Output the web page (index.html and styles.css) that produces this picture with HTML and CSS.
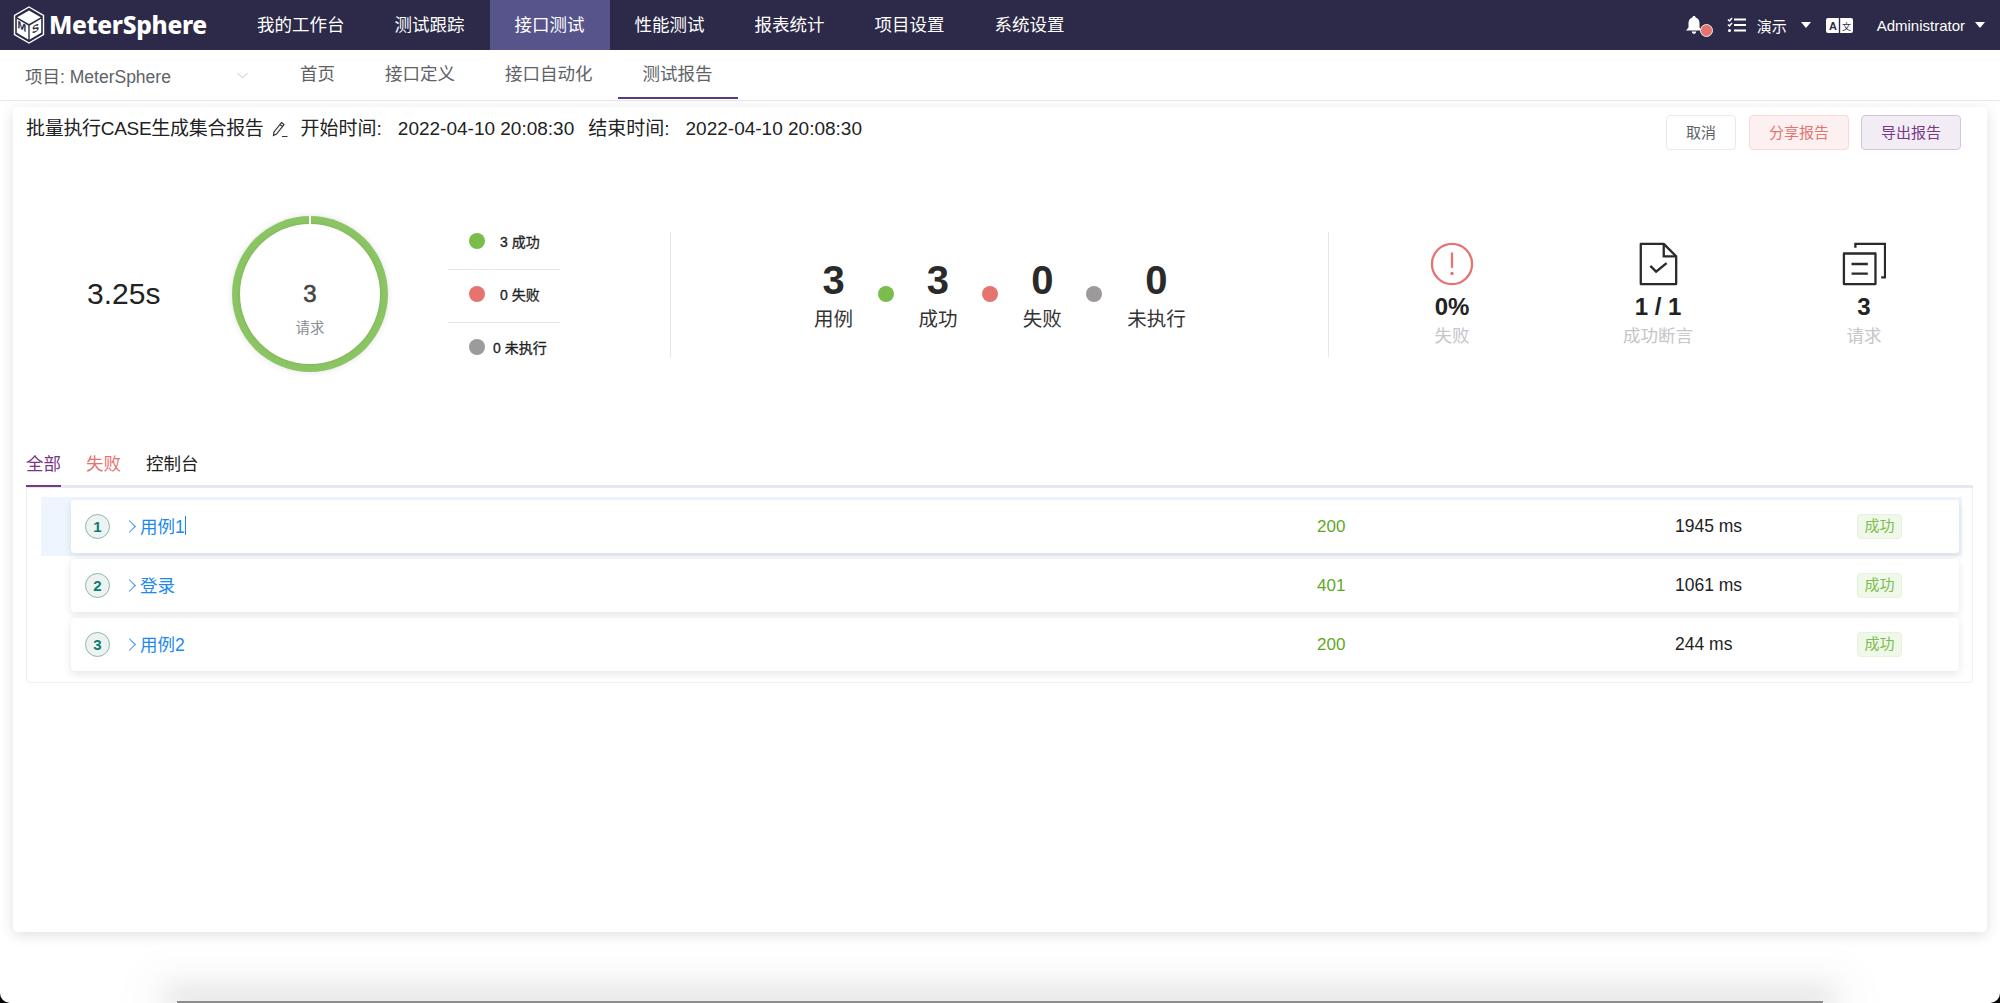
FILE: index.html
```html
<!DOCTYPE html>
<html>
<head>
  <meta charset="UTF-8">
  <title>测试报告</title>
  <link rel="stylesheet" href="styles.css">
</head>
<body>
<div class="page">
  <header class="topbar">
    <div class="brand">
      <svg class="logo" viewBox="0 0 32 38">
        <path d="M16 1 30.5 9.5V28.5L16 37 1.5 28.5V9.5Z" fill="#2c2a48" stroke="#fff" stroke-width="1.4"/>
        <path d="M16 4.5 27.8 11.2 16 18 4.2 11.2Z" fill="#fff"/>
        <path d="M3.8 12.8 15.3 19.5V33.5L3.8 26.8Z" fill="#fff"/>
        <path d="M28.2 12.8 16.7 19.5V33.5L28.2 26.8Z" fill="#fff"/>
        <text class="logo-letter" transform="matrix(1 .55 0 1 4.5 21.5)">M</text>
        <text class="logo-letter" transform="matrix(1 -.55 0 1 19 28)">S</text>
      </svg>
      <span class="brand-name">MeterSphere</span>
    </div>
    <nav class="mainnav">
      <a>我的工作台</a>
      <a>测试跟踪</a>
      <a class="on">接口测试</a>
      <a>性能测试</a>
      <a>报表统计</a>
      <a>项目设置</a>
      <a>系统设置</a>
    </nav>
    <div class="tools">
      <span class="bell">
        <svg width="18" height="20" viewBox="0 0 18 20"><path d="M9 1c1 0 1.6.7 1.6 1.5C13 3.3 14.5 5.5 14.5 8v4.5L17 15.5H1L3.5 12.5V8C3.5 5.5 5 3.3 7.4 2.5 7.4 1.7 8 1 9 1ZM6.8 16.5h4.4C11 18 10.2 18.8 9 18.8S7 18 6.8 16.5Z" fill="#fff"/></svg>
        <i class="bell-dot"></i>
      </span>
      <svg class="tasks" width="19" height="16" viewBox="0 0 19 16">
        <path d="M1 2.5 2.5 4 5 1M1 7.5 2.5 9 5 6" fill="none" stroke="#fff" stroke-width="1.5"/>
        <circle cx="2.5" cy="13.5" r="1.5" fill="#fff"/>
        <path d="M7 2.5h12M7 8h12M7 13.5h12" stroke="#fff" stroke-width="2"/>
      </svg>
      <span class="tool-text">演示</span>
      <i class="caret caret-a"></i>
      <svg class="lang" width="27" height="15" viewBox="0 0 27 15">
        <rect x="0" y="0" width="27" height="15" rx="2" fill="#fff"/>
        <rect x="12.8" y="0" width="1.4" height="15" fill="#2c2a48"/>
        <text class="lang-a" x="3" y="11.5">A</text>
        <text class="lang-b" x="16" y="11.5">文</text>
      </svg>
      <span class="tool-text user">Administrator</span>
      <i class="caret"></i>
    </div>
  </header>

  <div class="subnav">
    <div class="project">
      <span>项目: MeterSphere</span>
      <svg width="11" height="7" viewBox="0 0 11 7"><path d="M.5 1 5.5 6 10.5 1" fill="none" stroke="#c0c4cc" stroke-width="1"/></svg>
    </div>
    <a>首页</a>
    <a>接口定义</a>
    <a>接口自动化</a>
    <a class="on">测试报告</a>
  </div>

  <main class="main">
    <section class="card">
      <div class="titlebar">
        <div class="title">
          <span class="report-name">批量执行CASE生成集合报告</span>
          <svg class="pencil" width="17" height="17" viewBox="0 0 17 17"><path d="M10.5 1.5 13 3.5 5.5 13 2.5 14.5 3 11ZM9 3.5 11.5 5.5M11 15.5H16.5" fill="none" stroke="#333" stroke-width="1.2"/></svg>
          <span class="time-label">开始时间:</span>
          <span class="time-value">2022-04-10 20:08:30</span>
          <span class="time-label end">结束时间:</span>
          <span class="time-value">2022-04-10 20:08:30</span>
        </div>
        <div class="actions">
          <button class="btn">取消</button>
          <button class="btn btn-red">分享报告</button>
          <button class="btn btn-purple">导出报告</button>
        </div>
      </div>

      <div class="summary">
        <div class="duration">3.25s</div>
        <div class="ring">
          <div class="ring-inner">
            <b>3</b>
            <span>请求</span>
          </div>
        </div>
        <ul class="legend">
          <li><i class="dot green"></i><span class="legend-text">3 成功</span></li>
          <li><i class="dot red"></i><span class="legend-text">0 失败</span></li>
          <li><i class="dot grey"></i><span class="legend-text wide">0 未执行</span></li>
        </ul>
        <div class="stats">
          <div class="stat"><b>3</b><span>用例</span></div>
          <i class="dot green"></i>
          <div class="stat"><b>3</b><span>成功</span></div>
          <i class="dot red"></i>
          <div class="stat"><b>0</b><span>失败</span></div>
          <i class="dot grey"></i>
          <div class="stat"><b>0</b><span>未执行</span></div>
        </div>
        <div class="metrics">
          <div class="metric">
            <svg width="44" height="44" viewBox="0 0 46 46">
              <circle cx="23" cy="23" r="21" fill="none" stroke="#e57471" stroke-width="2.4"/>
              <path d="M23 11V27" stroke="#e57471" stroke-width="2.4"/>
              <circle cx="23" cy="33" r="1.8" fill="#e57471"/>
            </svg>
            <b>0%</b>
            <span>失败</span>
          </div>
          <div class="metric">
            <svg width="44" height="44" viewBox="0 0 46 46">
              <path d="M5 2H29L42 15V44H5Z" fill="none" stroke="#2a2a2a" stroke-width="2.4" stroke-linejoin="round"/>
              <path d="M29 2V15H42" fill="none" stroke="#2a2a2a" stroke-width="2.4"/>
              <path d="M15 25 21 31 32 22" fill="none" stroke="#2a2a2a" stroke-width="2.4"/>
            </svg>
            <b>1 / 1</b>
            <span>成功断言</span>
          </div>
          <div class="metric">
            <svg width="44" height="44" viewBox="0 0 46 46">
              <path d="M14 6V2H45V37H41" fill="none" stroke="#2a2a2a" stroke-width="2.4"/>
              <rect x="2" y="12" width="33" height="32" fill="none" stroke="#2a2a2a" stroke-width="2.4" stroke-linejoin="round"/>
              <path d="M10 23H27M10 33H27" stroke="#2a2a2a" stroke-width="2.4"/>
            </svg>
            <b>3</b>
            <span>请求</span>
          </div>
        </div>
      </div>

      <div class="tabs">
        <a class="on">全部</a>
        <a class="fail">失败</a>
        <a>控制台</a>
      </div>

      <div class="panel">
        <div class="row-wrap hl">
          <div class="row">
            <div class="name"><i class="num">1</i><i class="arrow"></i>用例1<i class="cursor"></i></div>
            <div class="code">200</div>
            <div class="cost">1945 ms</div>
            <div><span class="tag">成功</span></div>
          </div>
        </div>
        <div class="row-wrap">
          <div class="row">
            <div class="name"><i class="num">2</i><i class="arrow"></i>登录</div>
            <div class="code">401</div>
            <div class="cost">1061 ms</div>
            <div><span class="tag">成功</span></div>
          </div>
        </div>
        <div class="row-wrap">
          <div class="row">
            <div class="name"><i class="num">3</i><i class="arrow"></i>用例2</div>
            <div class="code">200</div>
            <div class="cost">244 ms</div>
            <div><span class="tag">成功</span></div>
          </div>
        </div>
      </div>
    </section>
  </main>

  <footer class="bottom"><div class="window-edge"></div></footer>
</div>
</body>
</html>
```

FILE: styles.css
```css
* {
  box-sizing: border-box;
}
html, body {
  margin: 0;
  height: 100%;
  overflow: hidden;
  background: #000;
}
body {
  font-family: "Liberation Sans", "Noto Sans CJK SC", sans-serif;
  font-size: 17px;
  color: #333;
}
i {
  font-style: normal;
}
.page {
  height: 1003px;
  background: #fff;
  border-radius: 0 0 10px 10px;
  overflow: hidden;
  display: flex;
  flex-direction: column;
}

/* top bar */
.topbar {
  height: 50px;
  flex: none;
  background: #2c2a48;
  display: flex;
  color: #fff;
}
.brand {
  width: 232px;
  padding-left: 13px;
  display: flex;
  align-items: center;
  gap: 4px;
}
.logo {
  width: 32px;
  height: 38px;
}
.logo-letter {
  font-family: "Liberation Sans", sans-serif;
  font-size: 10.5px;
  font-weight: 700;
  fill: #2c2a48;
}
.brand-name {
  font-family: "Noto Sans", sans-serif;
  font-size: 24.5px;
  font-weight: 800;
  letter-spacing: -.3px;
  margin-top: -2px;
}
.mainnav {
  display: flex;
}
.mainnav a {
  padding: 0 25px;
  line-height: 50px;
  font-size: 17.5px;
}
.mainnav a.on {
  background: #56548a;
}
.tools {
  margin-left: auto;
  padding-right: 15px;
  display: flex;
  align-items: center;
}
.bell {
  display: flex;
  align-items: center;
  margin-right: 14px;
}
.bell-dot {
  width: 13px;
  height: 13px;
  margin: 10px 0 0 -3px;
  border-radius: 50%;
  background: #e57471;
  border: 1px solid #eee;
}
.tasks {
  margin-right: 11px;
}
.tool-text {
  font-size: 15px;
}
.user {
  margin-left: 24px;
  margin-right: 10px;
}
.caret {
  width: 0;
  height: 0;
  border-left: 5px solid transparent;
  border-right: 5px solid transparent;
  border-top: 6px solid #fff;
}
.caret-a {
  margin-left: 14px;
  margin-right: 15px;
}
.lang-a {
  font-family: "Liberation Sans", sans-serif;
  font-size: 11px;
  font-weight: 700;
  fill: #2c2a48;
}
.lang-b {
  font-family: "Noto Sans CJK SC", sans-serif;
  font-size: 9px;
  fill: #2c2a48;
}

/* sub navigation */
.subnav {
  height: 51px;
  flex: none;
  display: flex;
  color: #606266;
  border-bottom: 1px solid #e8e8e8;
}
.subnav a {
  padding: 0 25px;
  line-height: 48px;
  height: 49px;
  font-size: 17.5px;
}
.subnav a.on {
  border-bottom: 2px solid #5b3a84;
}
.project {
  width: 275px;
  padding: 0 27px 0 25px;
  display: flex;
  align-items: center;
  justify-content: space-between;
  font-size: 17.5px;
}

/* card */
.main {
  flex: 1;
  display: flex;
  padding: 6px 13px 0;
}
.card {
  flex: 1;
  background: #fff;
  border-radius: 5px;
  box-shadow: 0 3px 14px rgba(0, 0, 0, .13);
  padding: 0 14px 0 13px;
}
.titlebar {
  display: flex;
  justify-content: space-between;
  align-items: flex-start;
}
.title {
  display: flex;
  align-items: center;
  padding-top: 7px;
  line-height: 30px;
  font-size: 19px;
  color: #222;
}
.report-name {
  letter-spacing: -.3px;
}
.pencil {
  margin: 0 13px 0 7px;
}
.time-value {
  margin-left: 16px;
}
.time-label.end {
  margin-left: 14px;
}
.actions {
  display: flex;
  gap: 13px;
  margin-top: 8px;
  margin-right: 12px;
}
.btn {
  height: 35px;
  width: 100px;
  padding: 0 0 2px;
  font: 15px "Liberation Sans", "Noto Sans CJK SC", sans-serif;
  background: #fff;
  color: #606266;
  border: 1px solid #e8eaee;
  border-radius: 4px;
}
.btn:first-child {
  width: 70px;
}
.btn-red {
  background: #fcf0f0;
  color: #e57471;
  border-color: #f8d8d8;
}
.btn-purple {
  margin-left: -1px;
  background: #f2edf4;
  color: #783887;
  border-color: #d6c4dc;
}

/* summary */
.summary {
  display: flex;
  align-items: center;
  height: 160px;
  margin-top: 64px;
}
.duration {
  width: 206px;
  padding-left: 61px;
  font-size: 30px;
  color: #222;
}
.ring {
  width: 156px;
  height: 156px;
  padding: 8px;
  border-radius: 50%;
  background: conic-gradient(#fff 0 .6deg, #8bc463 .6deg 359.4deg, #fff 359.4deg);
  box-shadow: 0 0 6px rgba(0, 0, 0, .12);
}
.ring-inner {
  height: 100%;
  padding-top: 57px;
  border-radius: 50%;
  background: #fff;
  text-align: center;
  box-shadow: 0 0 3px rgba(0, 0, 0, .12);
}
.ring-inner b {
  display: block;
  font-size: 24px;
  font-weight: 400;
  line-height: 26px;
  color: #444;
  -webkit-text-stroke: .6px #444;
}
.ring-inner span {
  display: block;
  margin-top: 11px;
  font-size: 14.5px;
  line-height: 20px;
  color: #8a8d94;
}
.legend {
  list-style: none;
  margin: 4px 0 0 60px;
  padding: 0;
  width: 112px;
}
.legend li {
  height: 53px;
  display: flex;
  align-items: center;
  padding-left: 21px;
  padding-bottom: 4px;
  border-bottom: 1px solid #e4e7ed;
  font-size: 14px;
  color: #222;
  -webkit-text-stroke: .3px #222;
}
.legend li:last-child {
  border-bottom: 0;
}
.legend-text {
  margin-left: 15px;
}
.legend-text.wide {
  margin-left: 8px;
}
.dot {
  flex: none;
  width: 16px;
  height: 16px;
  border-radius: 50%;
}
.dot.green {
  background: #7bbd4a;
}
.dot.red {
  background: #e57471;
}
.dot.grey {
  background: #9c9a9a;
}
.stats {
  width: 659px;
  height: 125px;
  margin-left: 110px;
  padding-left: 143px;
  display: flex;
  align-items: center;
  gap: 24.7px;
  border-left: 1px solid #e4e7ed;
  border-right: 1px solid #e4e7ed;
}
.stat {
  text-align: center;
  padding-top: 3px;
}
.stat b {
  display: block;
  font-size: 40px;
  line-height: 47px;
  color: #2a2a2a;
}
.stat span {
  display: block;
  line-height: 31px;
  font-size: 19.5px;
  color: #333;
}
.metrics {
  display: flex;
  margin-left: 20px;
}
.metric {
  width: 206px;
  display: flex;
  flex-direction: column;
  align-items: center;
  padding-top: 2px;
}
.metric b {
  margin-top: 6px;
  font-size: 24px;
  line-height: 30px;
  color: #222;
}
.metric span {
  margin-top: 1px;
  font-size: 17.5px;
  line-height: 26px;
  color: #c4c6ca;
}

/* tabs */
.tabs {
  display: flex;
  gap: 25px;
  margin-top: 69px;
  border-bottom: 3px solid #e6e8f0;
  font-size: 17.5px;
  color: #222;
}
.tabs a {
  line-height: 42px;
  height: 44px;
  margin-bottom: -2px;
}
.tabs a.on {
  color: #783887;
  border-bottom: 2px solid #783887;
}
.tabs a.fail {
  color: #e57471;
}

/* result rows */
.panel {
  padding: 9px 10px 8px 14px;
  border: 1px solid #f0f0f0;
  border-top: 0;
  border-radius: 0 0 4px 4px;
}
.row-wrap {
  padding: 3px 3px 3px 30px;
}
.row-wrap.hl {
  background: #eef5fe;
}
.row {
  height: 53px;
  display: grid;
  grid-template-columns: 1232px 358px 182px auto;
  align-items: center;
  padding-left: 14px;
  background: #fff;
  border-radius: 4px;
  box-shadow: 0 3px 8px rgba(0, 0, 0, .1);
}
.name {
  display: flex;
  align-items: center;
  padding-bottom: 3px;
  color: #1e88f0;
  font-size: 17.5px;
}
.num {
  width: 25px;
  height: 25px;
  margin-top: 3px;
  line-height: 23px;
  text-align: center;
  border-radius: 50%;
  background: #eef3f2;
  border: 1px solid #8ab8b2;
  color: #0d7a6f;
  font-size: 15px;
  font-weight: 700;
}
.arrow {
  width: 9px;
  height: 9px;
  margin: 2px 6px 0 15px;
  border-top: 1px solid #3a94f2;
  border-right: 1px solid #3a94f2;
  transform: rotate(45deg);
}
.cursor {
  width: 1px;
  height: 19px;
  background: #1e88f0;
}
.code {
  color: #5fa81f;
  font-size: 17px;
}
.cost {
  color: #222;
  font-size: 17.5px;
}
.tag {
  display: inline-block;
  width: 45px;
  height: 25px;
  line-height: 22px;
  text-align: center;
  font-size: 15px;
  color: #7dbd4f;
  background: #f0f8ea;
  border: 1px solid #e6f2dc;
  border-radius: 4px;
}

/* bottom edge of the window behind */
.bottom {
  height: 71px;
  flex: none;
  display: flex;
  justify-content: center;
  align-items: flex-end;
}
.window-edge {
  width: 1646px;
  height: 2px;
  background: #8c8c8c;
  box-shadow: 0 -4px 26px 10px rgba(0, 0, 0, .09), 0 0 40px 36px rgba(0, 0, 0, .025);
}
```
